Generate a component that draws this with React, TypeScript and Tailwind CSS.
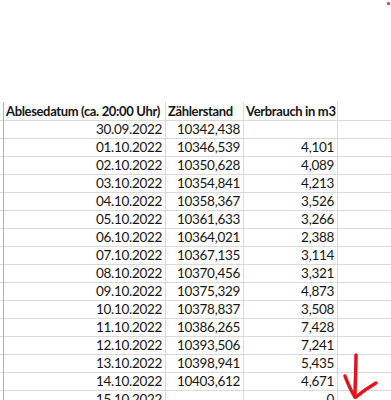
const rows: [string, string, string][] = [
  ["30.09.2022", "10342,438", ""],
  ["01.10.2022", "10346,539", "4,101"],
  ["02.10.2022", "10350,628", "4,089"],
  ["03.10.2022", "10354,841", "4,213"],
  ["04.10.2022", "10358,367", "3,526"],
  ["05.10.2022", "10361,633", "3,266"],
  ["06.10.2022", "10364,021", "2,388"],
  ["07.10.2022", "10367,135", "3,114"],
  ["08.10.2022", "10370,456", "3,321"],
  ["09.10.2022", "10375,329", "4,873"],
  ["10.10.2022", "10378,837", "3,508"],
  ["11.10.2022", "10386,265", "7,428"],
  ["12.10.2022", "10393,506", "7,241"],
  ["13.10.2022", "10398,941", "5,435"],
  ["14.10.2022", "10403,612", "4,671"],
  ["15.10.2022", "", "0"],
];

const rowCls = "grid grid-cols-[3px_161px_77px_93px_1fr] gap-x-px h-[17px]";

export default function App() {
  return (
    <div
      className="relative w-[391px] h-[400px] overflow-hidden bg-white text-[13.5px] tracking-[-0.3px] text-[#151515]"
      style={{ fontFamily: "Lato, 'Liberation Sans', sans-serif" }}
    >
      <div className="h-[102px]" />
      <div className="flex flex-col gap-y-px bg-[#d9d9d9]">
        {/* header */}
        <div className={`${rowCls} h-[18px] font-bold text-[13px] tracking-[-0.35px] leading-[18px]`}>
          <div className="bg-white" />
          <div className="bg-white pl-[2px] whitespace-nowrap">Ablesedatum (ca. 20:00 Uhr)</div>
          <div className="bg-white pl-[2px] whitespace-nowrap">Zählerstand</div>
          <div className="bg-white pl-[2px] whitespace-nowrap">Verbrauch in m3</div>
          <div className="bg-white" />
        </div>
        {rows.map(([d, z, v]) => (
          <div key={d} className={`${rowCls} leading-[17px]`}>
            <div className="bg-white" />
            <div className="bg-white pr-[3px] text-right">{d}</div>
            <div className="bg-white pr-[3px] text-right">{z}</div>
            <div className="bg-white pr-[3px] text-right">{v}</div>
            <div className="bg-white" />
          </div>
        ))}
      </div>
      <div className="absolute left-[3px] top-[102px] bottom-0 w-px bg-[#b4b4b4]" />
      <div className="absolute right-[1px] top-[2px] h-[3px] w-[3px] rounded-full bg-[#e8242c]" />
      <svg className="absolute left-0 top-0" width="391" height="400" viewBox="0 0 391 400">
        <g fill="none" stroke="#e3141c" strokeWidth="3.5" strokeLinecap="round" strokeLinejoin="round">
          <path d="M356 355 C356 370 355 385 355 397" />
          <path d="M345 376 C348 384 351 391 355 397" />
          <path d="M356 397 C362 392 369 387 376 383" />
        </g>
      </svg>
    </div>
  );
}
